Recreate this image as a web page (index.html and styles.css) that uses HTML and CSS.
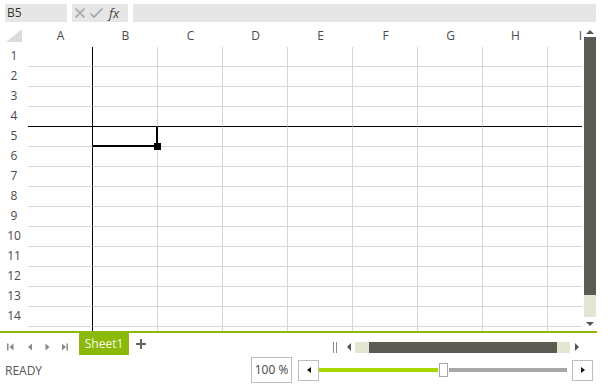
FILE: index.html
```html
<!DOCTYPE html>
<html lang="en">
<head>
    <meta charset="UTF-8">
    <title>Spreadsheet</title>
    <link rel="stylesheet" href="styles.css">
</head>
<body>
    <div class="app">
        <div class="formula">
            <div class="namebox">B5</div>
            <div class="fxbox">
                <svg width="30" height="12" viewBox="0 0 30 12">
                    <path d="M1.5 1.5 L10.5 10.5 M10.5 1.5 L1.5 10.5" stroke="#a6a6a6" stroke-width="1.7" fill="none"/>
                    <path d="M16.5 6.5 L20 10 L28.5 1.5" stroke="#a6a6a6" stroke-width="1.7" fill="none"/>
                </svg>
                <span class="fx">fx</span>
            </div>
            <div class="input"></div>
        </div>

        <div class="sheet">
            <div class="grid">
                <table>
                    <colgroup>
                        <col class="rh"><col><col><col><col><col><col><col><col><col>
                    </colgroup>
                    <tr class="head">
                        <th class="corner"><svg width="17" height="14" viewBox="0 0 17 14"><polygon points="16,0 16,13 0,13" fill="#dcdcdc"/></svg></th>
                        <th>A</th><th>B</th><th>C</th><th>D</th><th>E</th><th>F</th><th>G</th><th>H</th><th>I</th>
                    </tr>
                    <tr><th>1</th><td></td><td></td><td></td><td></td><td></td><td></td><td></td><td></td><td></td></tr>
                    <tr><th>2</th><td></td><td></td><td></td><td></td><td></td><td></td><td></td><td></td><td></td></tr>
                    <tr><th>3</th><td></td><td></td><td></td><td></td><td></td><td></td><td></td><td></td><td></td></tr>
                    <tr class="frz"><th>4</th><td></td><td></td><td></td><td></td><td></td><td></td><td></td><td></td><td></td></tr>
                    <tr><th>5</th><td></td><td class="sel"></td><td></td><td></td><td></td><td></td><td></td><td></td><td></td></tr>
                    <tr><th>6</th><td></td><td></td><td></td><td></td><td></td><td></td><td></td><td></td><td></td></tr>
                    <tr><th>7</th><td></td><td></td><td></td><td></td><td></td><td></td><td></td><td></td><td></td></tr>
                    <tr><th>8</th><td></td><td></td><td></td><td></td><td></td><td></td><td></td><td></td><td></td></tr>
                    <tr><th>9</th><td></td><td></td><td></td><td></td><td></td><td></td><td></td><td></td><td></td></tr>
                    <tr><th>10</th><td></td><td></td><td></td><td></td><td></td><td></td><td></td><td></td><td></td></tr>
                    <tr><th>11</th><td></td><td></td><td></td><td></td><td></td><td></td><td></td><td></td><td></td></tr>
                    <tr><th>12</th><td></td><td></td><td></td><td></td><td></td><td></td><td></td><td></td><td></td></tr>
                    <tr><th>13</th><td></td><td></td><td></td><td></td><td></td><td></td><td></td><td></td><td></td></tr>
                    <tr><th>14</th><td></td><td></td><td></td><td></td><td></td><td></td><td></td><td></td><td></td></tr>
                    <tr><th></th><td></td><td></td><td></td><td></td><td></td><td></td><td></td><td></td><td></td></tr>
                </table>
            </div>
            <div class="vscroll">
                <div class="arrow-box up"><span class="tri-up"></span></div>
                <div class="vtrack"><div class="vthumb"></div></div>
                <div class="arrow-box down"><span class="tri-down"></span></div>
            </div>
        </div>

        <div class="tabs">
            <svg class="nav" width="72" height="10" viewBox="0 0 72 10">
                <rect x="7" y="1.5" width="1.5" height="7" fill="#8a8a8a"/>
                <polygon points="13.5,1.5 9.5,5 13.5,8.5" fill="#8a8a8a"/>
                <polygon points="32,1.5 28,5 32,8.5" fill="#8a8a8a"/>
                <polygon points="45.5,1.5 49.5,5 45.5,8.5" fill="#8a8a8a"/>
                <polygon points="62,1.5 66,5 62,8.5" fill="#8a8a8a"/>
                <rect x="66.5" y="1.5" width="1.5" height="7" fill="#8a8a8a"/>
            </svg>
            <div class="tab">Sheet1</div>
            <svg class="add" width="10" height="10" viewBox="0 0 10 10">
                <path d="M5 0 V10 M0 5 H10" stroke="#666" stroke-width="2"/>
            </svg>
            <div class="spacer"></div>
            <div class="hscroll">
                <span class="splitter"></span>
                <span class="tri-left"></span>
                <div class="htrack"><div class="hthumb"></div></div>
                <span class="tri-right"></span>
            </div>
        </div>

        <div class="status">
            <span class="ready">READY</span>
            <div class="spacer"></div>
            <div class="zoombox">100 %</div>
            <div class="zbtn"><span class="tri-left small"></span></div>
            <div class="slider">
                <div class="fill"></div>
                <div class="thumb"></div>
                <div class="rest"></div>
            </div>
            <div class="zbtn"><span class="tri-right small"></span></div>
        </div>
    </div>
</body>
</html>
```

FILE: styles.css
```css
/* Base */
body, html {
    margin: 0;
    padding: 0;
    background-color: #ffffff;
    font-family: "Open Sans", "Noto Sans", sans-serif;
    font-size: 12px;
    color: #444;
}

.app {
    width: 597px;
}

/* Formula bar */
.formula {
    display: flex;
    gap: 5px;
    padding: 4px 0 4px 5px;
    width: 591px;
    height: 18px;
}

.namebox {
    width: 60px;
    padding-left: 2px;
    background-color: #e6e6e6;
    line-height: 18px;
    color: #333;
}

.fxbox {
    width: 54px;
    padding-left: 2px;
    display: flex;
    align-items: center;
    background-color: #e6e6e6;
}

.fx {
    margin-left: 5px;
    font-style: italic;
    font-size: 13px;
    color: #444;
}

.input {
    flex: 1;
    background-color: #e6e6e6;
}

/* Sheet */
.sheet {
    display: flex;
    height: 305px;
}

.grid {
    width: 582px;
    overflow: hidden;
}

.grid table {
    border-collapse: separate;
    border-spacing: 0;
    table-layout: fixed;
    width: 613px;
}

.grid col {
    width: 65px;
}

.grid col.rh {
    width: 28px;
}

.grid th {
    font-weight: normal;
    padding: 0 0 2px 0;
    height: 18px;
    line-height: 16px;
    text-align: center;
    color: #4a4a4a;
}

.grid tr.head th {
    height: 19px;
}

.grid th.corner {
    padding: 0;
    height: 21px;
    vertical-align: top;
}

.grid th.corner svg {
    display: block;
    margin: 3px 0 0 6px;
}

.grid td {
    padding: 0;
    height: 20px;
    box-sizing: border-box;
    border-right: 1px solid #d6d6d6;
    border-bottom: 1px solid #d6d6d6;
}

/* frozen panes */
.grid td:nth-child(2) {
    border-right-color: #000;
}

.grid tr.frz td {
    border-bottom-color: #000;
}

/* selected cell */
.grid td.sel {
    position: relative;
}

.grid td.sel::after {
    content: "";
    position: absolute;
    left: 0;
    top: 0;
    right: -1px;
    bottom: -1px;
    border-right: 2px solid #000;
    border-bottom: 2px solid #000;
}

.grid td.sel::before {
    content: "";
    position: absolute;
    right: -4px;
    bottom: -4px;
    width: 7px;
    height: 7px;
    background-color: #000;
    z-index: 2;
}

/* vertical scroll */
.vscroll {
    width: 15px;
    display: flex;
    flex-direction: column;
    align-items: center;
    padding-left: 1px;
    box-sizing: border-box;
}

.arrow-box {
    display: flex;
    align-items: center;
    justify-content: center;
    width: 12px;
}

.arrow-box.up {
    height: 11px;
}

.arrow-box.down {
    height: 14px;
}

.tri-up {
    border-left: 4px solid transparent;
    border-right: 4px solid transparent;
    border-bottom: 4px solid #555;
}

.tri-down {
    border-left: 4px solid transparent;
    border-right: 4px solid transparent;
    border-top: 4px solid #555;
}

.vtrack {
    width: 12px;
    flex: 1;
    background-color: #e4e6d4;
}

.vthumb {
    height: 258px;
    background-color: #5a5b53;
}

/* Sheet tabs */
.tabs {
    display: flex;
    align-items: center;
    height: 22px;
    border-top: 2px solid #8cb80a;
}

.tabs .nav {
    margin-top: 6px;
    margin-right: 7px;
}

.tab {
    width: 50px;
    height: 22px;
    line-height: 22px;
    text-align: center;
    background-color: #8cb80a;
    color: #f4f8ea;
}

.tabs .add {
    margin-left: 7px;
}

.spacer {
    flex: 1;
}

.hscroll {
    display: flex;
    align-items: center;
    margin-top: 6px;
    width: 264px;
}

.splitter {
    width: 2px;
    height: 11px;
    border-left: 1px solid #8a8a8a;
    border-right: 1px solid #8a8a8a;
    margin-right: 10px;
}

.tri-left {
    border-top: 4px solid transparent;
    border-bottom: 4px solid transparent;
    border-right: 4px solid #555;
    margin-right: 4px;
}

.tri-right {
    border-top: 4px solid transparent;
    border-bottom: 4px solid transparent;
    border-left: 4px solid #555;
    margin-left: 5px;
}

.htrack {
    width: 215px;
    height: 11px;
    background-color: #e4e6d4;
    padding-left: 14px;
    box-sizing: border-box;
}

.hthumb {
    width: 188px;
    height: 11px;
    background-color: #5a5b53;
}

/* Status bar */
.status {
    display: flex;
    align-items: center;
    height: 30px;
    padding-right: 4px;
}

.ready {
    padding-left: 5px;
    color: #555;
}

.zoombox {
    width: 39px;
    height: 24px;
    line-height: 24px;
    border: 1px solid #bdbdbd;
    text-align: center;
    color: #444;
    margin-right: 6px;
}

.zbtn {
    width: 19px;
    height: 19px;
    border: 1px solid #bdbdbd;
    display: flex;
    align-items: center;
    justify-content: center;
}

.tri-left.small,
.tri-right.small {
    margin: 0;
    border-top-width: 3px;
    border-bottom-width: 3px;
    border-left-color: #111;
    border-right-color: #111;
}

.tri-left.small {
    border-left: none;
}

.tri-right.small {
    border-right: none;
}

.slider {
    display: flex;
    align-items: center;
    width: 248px;
    margin-right: 5px;
}

.slider .fill {
    width: 119px;
    height: 4px;
    background-color: #a8d600;
}

.slider .thumb {
    width: 7px;
    height: 12px;
    border: 1px solid #a8a8a8;
    background-color: #fff;
    margin: 0 1px;
}

.slider .rest {
    flex: 1;
    height: 4px;
    background-color: #a8a8a8;
}
```
